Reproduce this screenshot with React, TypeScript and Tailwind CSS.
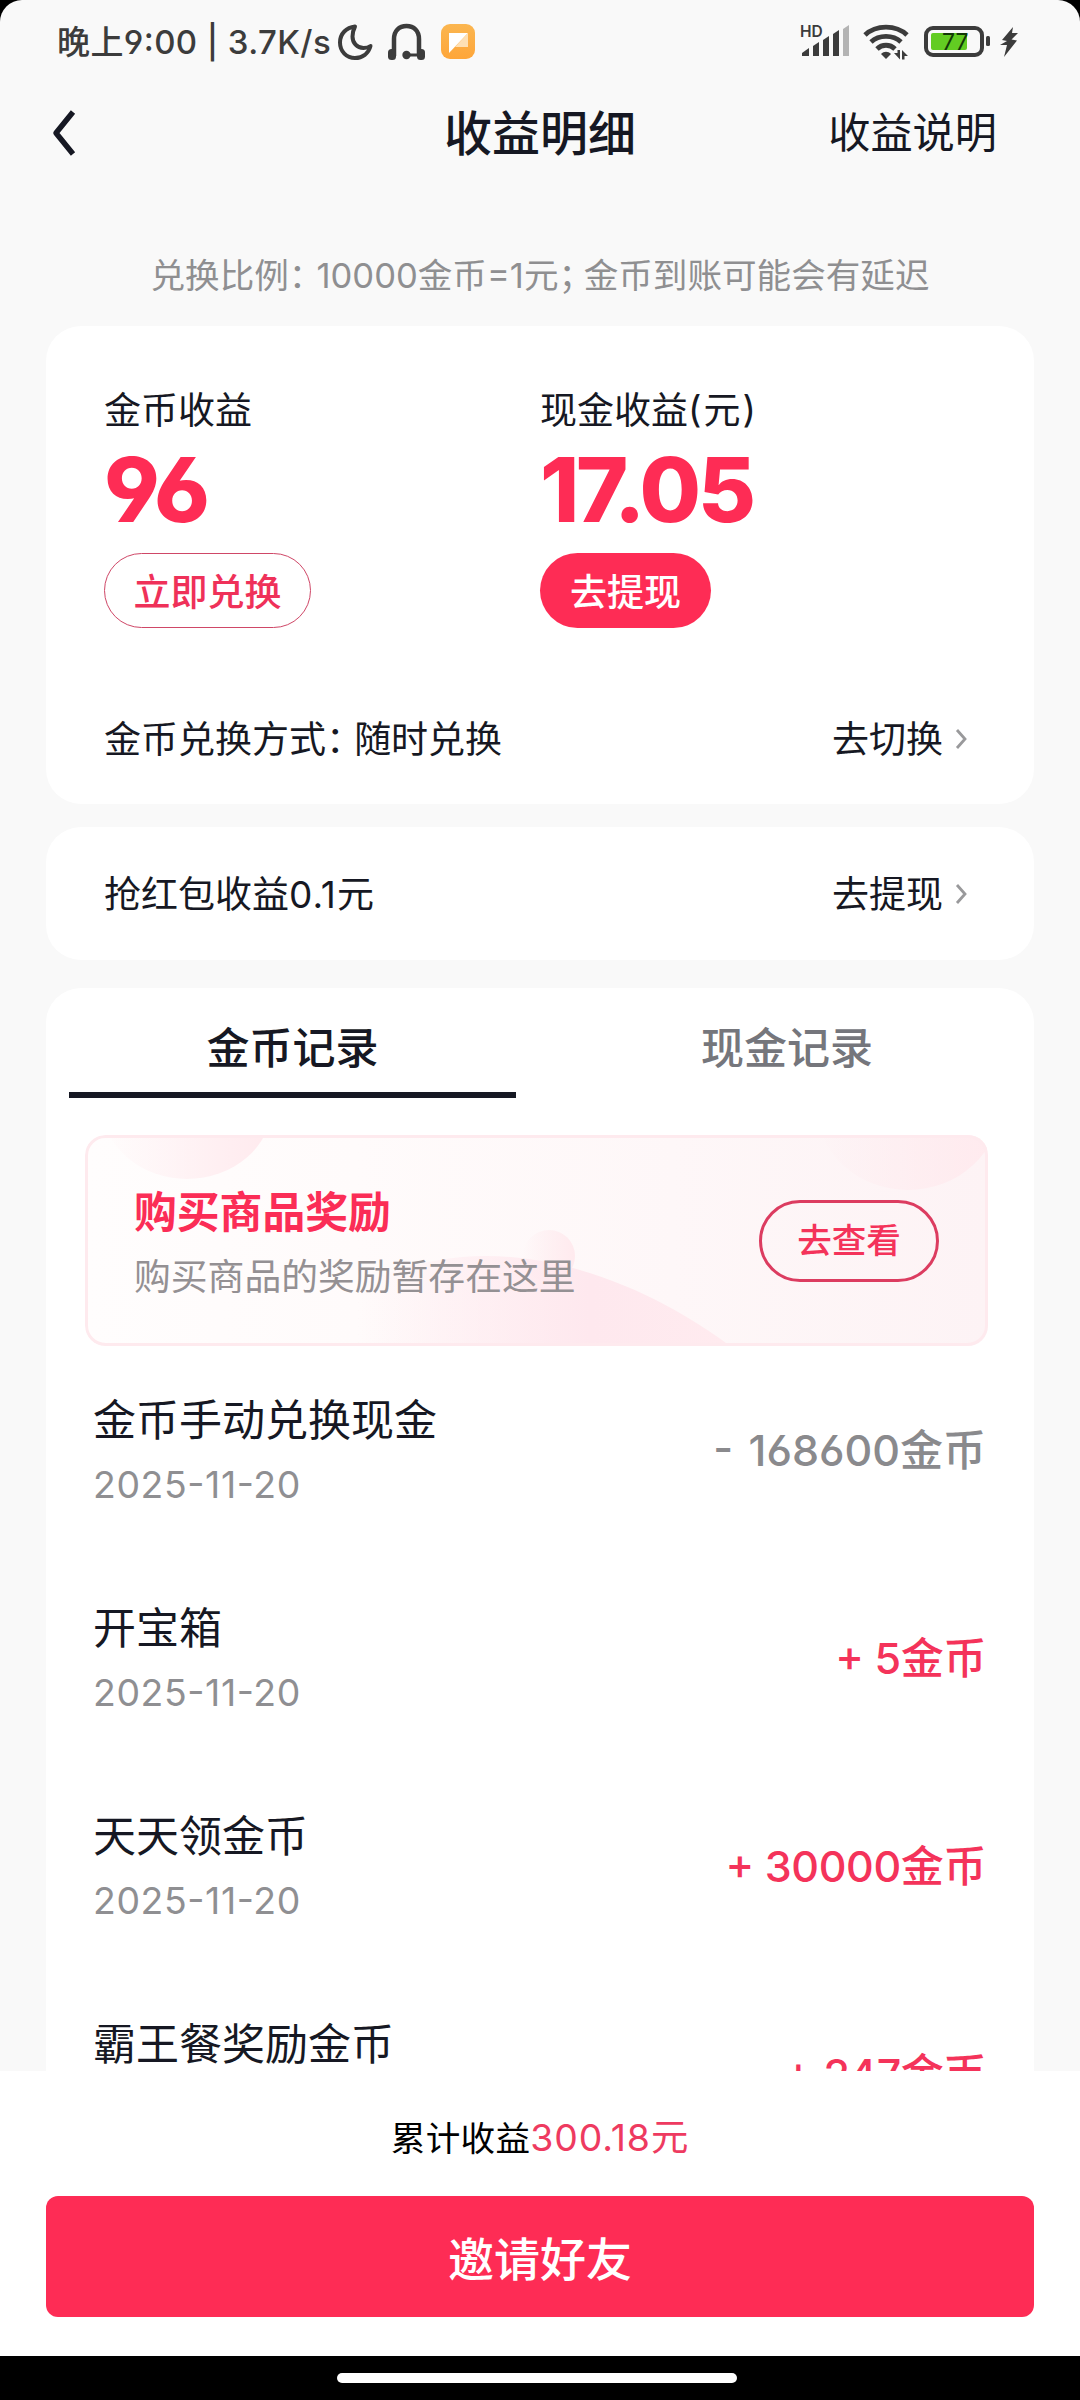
import React from "react";

interface RecordItem {
  id: number;
  title: string;
  date: string;
  amount: string;
  income: boolean;
}

const records: RecordItem[] = [
  { id: 1, title: "金币手动兑换现金", date: "2025-11-20", amount: "- 168600金币", income: false },
  { id: 2, title: "开宝箱", date: "2025-11-20", amount: "+ 5金币", income: true },
  { id: 3, title: "天天领金币", date: "2025-11-20", amount: "+ 30000金币", income: true },
  { id: 4, title: "霸王餐奖励金币", date: "2025-11-20", amount: "+ 247金币", income: true },
];

const StatusBar: React.FC = () => (
  <div className="flex h-[84px] shrink-0 items-center justify-between pl-[57px] pr-[62px] text-[#3c3c3c]">
    <div className="flex items-center">
      <span className="text-[33px] leading-[40px] font-[450] tracking-[0.400px] whitespace-nowrap">晚上9:00 | 3.7K/s</span>
      {/* Do not disturb */}
      <svg className="ml-[6px]" width="36" height="38" viewBox="0 0 36 38" fill="none">
        <path
          d="M18 3.500C9.500 4.500 3 10.500 3 19.500C3 28.500 9.500 35 18 35C25.500 35 31.500 30.500 33.500 23C31.500 24.500 29 25 26.500 25C20 25 15.500 20 15.500 13.500C15.500 9.500 16.500 6.500 18 3.500Z"
          stroke="currentColor"
          strokeWidth="4"
          strokeLinejoin="round"
        />
      </svg>
      {/* Headset */}
      <svg className="ml-[14px]" width="40" height="38" viewBox="0 0 40 38" fill="none">
        <path d="M7 33V16C7 8 12 3 19.500 3C27 3 32 8 32 16V33" stroke="currentColor" strokeWidth="4.500" />
        <path d="M20 32H32" stroke="currentColor" strokeWidth="3" />
        <rect x="1" y="26" width="8" height="11" rx="3.500" fill="currentColor" />
        <rect x="30" y="26" width="8" height="11" rx="3.500" fill="currentColor" />
        <circle cx="19.500" cy="32" r="4.200" fill="currentColor" />
      </svg>
      {/* App badge */}
      <svg className="ml-[14px]" width="34" height="36" viewBox="0 0 34 36">
        <defs>
          <linearGradient id="badge" x1="0" y1="0" x2="0" y2="1">
            <stop offset="0" stopColor="#fbb650" />
            <stop offset="1" stopColor="#fea63a" />
          </linearGradient>
        </defs>
        <rect width="34" height="35" rx="9" fill="url(#badge)" />
        <path d="M8 9H27L8 29Z" fill="#fff" />
        <path d="M27 9V23H14Z" fill="#fee0b5" />
      </svg>
    </div>

    <div className="flex items-center">
      {/* HD signal */}
      <svg width="52" height="40" viewBox="0 0 52 40">
        <text x="0" y="15" fontSize="15.500" fontWeight="600" fill="currentColor">
          HD
        </text>
        <path d="M2 34V31L9 26V34Z" fill="currentColor" />
        <path d="M13 34V24L19 20V34Z" fill="currentColor" />
        <path d="M23 34V18L29 14V34Z" fill="currentColor" />
        <path d="M33 34V12L39 8V34Z" fill="currentColor" />
        <path d="M43 34V7L49 3V34Z" fill="#b4b4b4" />
      </svg>
      {/* Wifi */}
      <svg className="ml-[10px]" width="48" height="38" viewBox="0 0 48 38" fill="none">
        <path d="M3 12C14 1.500 34 1.500 45 12" stroke="currentColor" strokeWidth="4.800" />
        <path d="M9 19C17 11.500 31 11.500 39 19" stroke="currentColor" strokeWidth="4.800" />
        <path d="M15 26C20 21 28 21 33 26" stroke="currentColor" strokeWidth="4.800" />
        <path d="M19 31C22 28 26 28 29 31L24 36Z" fill="currentColor" />
        <path d="M38 27V36.500L32 30H35.500V27Z" fill="currentColor" />
        <path d="M40 36.500V27L46 33H42.500V36.500Z" fill="currentColor" />
      </svg>
      {/* Battery */}
      <svg className="ml-[14px]" width="68" height="32" viewBox="0 0 68 32" fill="none">
        <rect x="2" y="2" width="56" height="27" rx="7" stroke="currentColor" strokeWidth="4" />
        <rect x="7" y="7" width="36" height="17" rx="2" fill="#62cc22" />
        <rect x="62" y="10" width="4" height="10" rx="1.500" fill="currentColor" />
        <text x="18" y="24" fontSize="23" fill="#123807">
          77
        </text>
      </svg>
      {/* Charging */}
      <svg className="ml-[8px]" width="18" height="32" viewBox="0 0 18 32">
        <path d="M13 1L2 14L7 15L0 19H7L4 31L17 14.500L11.500 13.500L18 7H12Z" fill="currentColor" />
      </svg>
    </div>
  </div>
);

const ArrowRight: React.FC = () => (
  <svg className="ml-[11px] -mt-[2px]" width="14" height="22" viewBox="0 0 14 22" fill="none">
    <path d="M3 2L11 11L3 20" stroke="#99999b" strokeWidth="2.800" />
  </svg>
);

const RecordRow: React.FC<{ item: RecordItem }> = ({ item }) => (
  <div className="flex h-[208px] shrink-0 items-center justify-between pl-[47px] pr-[48px]">
    <div className="flex flex-col">
      <span className="text-[43px] leading-[60px]">{item.title}</span>
      <span className="mt-[9px] text-[37.4px] leading-[52px] tracking-[0.600px] text-[#8f8f92]">{item.date}</span>
    </div>
    <span
      className={`text-[43px] leading-[60px] font-medium whitespace-nowrap ${
        item.income ? "tracking-[-0.400px] text-[#f4335a]" : "[word-spacing:4px] text-[#8a8a8d]"
      }`}
    >
      {item.amount}
    </span>
  </div>
);

const RewardBanner: React.FC = () => (
  <div className="relative ml-[39px] mr-[46px] mt-[37px] h-[211px] shrink-0 overflow-hidden rounded-[20px]">
    {/* Soft bubbles behind the text */}
    <svg className="absolute inset-0" width="903" height="211" viewBox="0 0 903 211">
      <defs>
        <linearGradient id="base" x1="0" x2="1">
          <stop offset="0" stopColor="#fffdfd" />
          <stop offset="0.300" stopColor="#fffbfb" />
          <stop offset="1" stopColor="#fdf3f5" />
        </linearGradient>
        <linearGradient id="bubble" x1="0" x2="1">
          <stop offset="0" stopColor="#ffe8ec" stopOpacity="0" />
          <stop offset="1" stopColor="#ffeaee" />
        </linearGradient>
        <linearGradient id="hill" x1="0" x2="1">
          <stop offset="0.200" stopColor="#ffe6ec" stopOpacity="0" />
          <stop offset="0.700" stopColor="#fee8ee" />
          <stop offset="1" stopColor="#ffebef" />
        </linearGradient>
      </defs>
      <rect width="903" height="211" fill="url(#base)" />
      <ellipse cx="102" cy="-30" rx="85" ry="74" fill="url(#bubble)" />
      <ellipse cx="823" cy="-30" rx="92" ry="85" fill="url(#bubble)" />
      <circle cx="464" cy="121" r="26" fill="url(#bubble)" />
      <path d="M180 211C250 150 330 121 400 121C500 121 590 170 645 211Z" fill="url(#hill)" />
      <rect x="1.500" y="1.500" width="900" height="208" rx="19" fill="none" stroke="#feeaee" strokeWidth="3" />
    </svg>
    <div className="relative flex h-full items-center justify-between pl-[49px] pr-[49px]">
      <div className="mt-[5px] flex flex-col">
        <span className="text-[42.800px] leading-[60px] font-bold text-[#fb2d56]">购买商品奖励</span>
        <span className="mt-[8px] text-[36.800px] leading-[52px] text-[#949093]">购买商品的奖励暂存在这里</span>
      </div>
      <button className="flex h-[82px] w-[180px] items-center justify-center rounded-full border-3 border-[#dc3c60] text-[34.600px] font-medium text-[#f4335a]">
        去查看
      </button>
    </div>
  </div>
);

const App: React.FC = () => {
  return (
    <div className="h-[2400px] w-[1080px] overflow-hidden bg-black font-['Inter','Noto_Sans_CJK_SC',sans-serif] text-[#161823] [font-feature-settings:'case','cv03','cv04']">
      <div className="flex h-[2356px] flex-col overflow-hidden rounded-t-[22px] bg-[#f9f9f9]">
        <StatusBar />

        {/* Title bar */}
        <header className="grid h-[98px] shrink-0 grid-cols-3 items-center pl-[50px] pr-[83px]">
          <svg width="28" height="50" viewBox="0 0 28 50" fill="none">
            <path d="M23 4L6 25L23 46" stroke="#161823" strokeWidth="5.500" strokeLinejoin="round" />
          </svg>
          <h1 className="ml-[33px] pt-[2px] text-center text-[48px] font-medium">收益明细</h1>
          <span className="text-right text-[42.200px]">收益说明</span>
        </header>

        <p className="mt-[67px] text-center text-[34.600px] leading-[52px] text-[#8f8f91]">
          兑换比例<span className="tracking-[-0.200em]">：</span>10000金币=1元
          <span className="tracking-[-0.270em]">；</span>金币到账可能会有延迟
        </p>

        {/* Balance */}
        <section className="mx-[46px] mt-[25px] flex h-[478px] shrink-0 flex-col rounded-[35px] bg-white pl-[58px] pr-[66px]">
          <div className="grid grid-cols-[436px_1fr] pt-[59px]">
            <div className="flex flex-col items-start">
              <span className="text-[37px] leading-[52px]">金币收益</span>
              <span className="mt-[6px] text-[89px] leading-[94px] font-extrabold tracking-[-0.060em] text-[#fe2c55]">96</span>
              <button className="mt-[16px] flex h-[75px] w-[207px] items-center justify-center rounded-full border border-[#cf4767] pt-[4px] text-[37px] font-medium text-[#ef3159]">
                立即兑换
              </button>
            </div>
            <div className="flex flex-col items-start">
              <span className="text-[37px] leading-[52px]">
                现金收益<span className="tracking-[2px]">(元)</span>
              </span>
              <span className="mt-[6px] text-[89px] leading-[94px] font-extrabold tracking-[-0.036em] text-[#fe2c55]">17.05</span>
              <button className="mt-[16px] flex h-[75px] w-[171px] items-center justify-center rounded-full bg-[#fe2c55] pt-[4px] text-[37px] font-medium text-white">
                去提现
              </button>
            </div>
          </div>
          <div className="mt-[86px] flex items-center justify-between text-[37px] leading-[52px]">
            <span>
              金币兑换方式<span className="tracking-[-0.240em]">：</span>随时兑换
            </span>
            <span className="flex items-center">
              去切换
              <ArrowRight />
            </span>
          </div>
        </section>

        <section className="mx-[46px] mt-[23px] flex h-[133px] shrink-0 items-center justify-between rounded-[35px] bg-white pt-[2px] pl-[58px] pr-[66px] text-[37px]">
          <span>
            抢红包收益<span className="tracking-[1px]">0.1</span>元
          </span>
          <span className="flex items-center">
            去提现
            <ArrowRight />
          </span>
        </section>

        {/* Records */}
        <section className="mx-[46px] mt-[28px] flex h-[1083px] shrink-0 flex-col overflow-hidden rounded-t-[35px] bg-white">
          <div className="grid shrink-0 grid-cols-2 text-center text-[43px] font-medium">
            <div className="pl-[23px] pr-[24px]">
              <div className="h-[110px] border-b-6 border-[#161823] leading-[121px]">金币记录</div>
            </div>
            <div className="h-[110px] leading-[121px] text-[#75767c]">现金记录</div>
          </div>
          <RewardBanner />
          <div className="flex flex-col">
            {records.map((item) => (
              <RecordRow key={item.id} item={item} />
            ))}
          </div>
        </section>

        {/* Footer */}
        <footer className="flex h-[285px] shrink-0 flex-col bg-white px-[46px]">
          <p className="mt-[41px] text-center text-[34.600px] leading-[52px] tracking-[0.300px] text-black">
            累计收益<span className="text-[37.400px] tracking-[0.900px] text-[#ee3a60]">300.18元</span>
          </p>
          <button className="mt-[32px] h-[121px] rounded-[12px] bg-[#fe2c55] pt-[5px] text-[46px] font-medium text-white">
            邀请好友
          </button>
        </footer>
      </div>

      {/* Gesture bar */}
      <div className="flex h-[44px] justify-center pr-[7px] pt-[17px]">
        <div className="h-[10px] w-[400px] rounded-full bg-white" />
      </div>
    </div>
  );
};

export default App;
